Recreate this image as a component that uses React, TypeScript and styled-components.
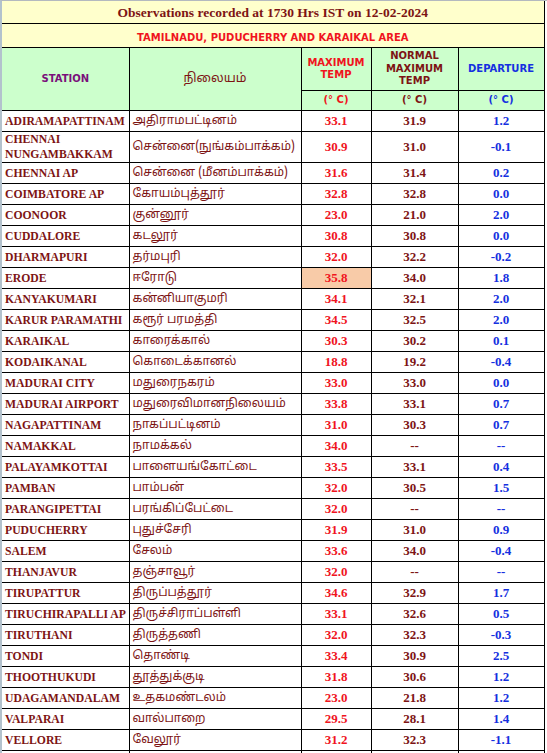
import React from 'react';
import styled, { createGlobalStyle } from 'styled-components';

const GlobalStyle = createGlobalStyle`
  html, body {
    margin: 0;
    padding: 0;
    background: #ffffff;
  }
`;

type Tone = 'red' | 'maroon' | 'blue' | 'purple';

const tones: Record<Tone, string> = {
  red: '#f0141e',
  maroon: '#7d1414',
  blue: '#1530e0',
  purple: '#7a0f7a',
};

type Row = {
  name: string;
  tamil: string;
  max: string;
  normal: string;
  dep: string;
  tall?: boolean;
  hot?: boolean;
};

const rows: Row[] = [
  { name: 'ADIRAMAPATTINAM', tamil: 'அதிராமபட்டினம்', max: '33.1', normal: '31.9', dep: '1.2' },
  { name: 'CHENNAI\nNUNGAMBAKKAM', tamil: 'சென்னை(நுங்கம்பாக்கம்)', max: '30.9', normal: '31.0', dep: '-0.1', tall: true },
  { name: 'CHENNAI AP', tamil: 'சென்னை (மீனம்பாக்கம்)', max: '31.6', normal: '31.4', dep: '0.2' },
  { name: 'COIMBATORE AP', tamil: 'கோயம்புத்தூர்', max: '32.8', normal: '32.8', dep: '0.0' },
  { name: 'COONOOR', tamil: 'குன்னூர்', max: '23.0', normal: '21.0', dep: '2.0' },
  { name: 'CUDDALORE', tamil: 'கடலூர்', max: '30.8', normal: '30.8', dep: '0.0' },
  { name: 'DHARMAPURI', tamil: 'தர்மபுரி', max: '32.0', normal: '32.2', dep: '-0.2' },
  { name: 'ERODE', tamil: 'ஈரோடு', max: '35.8', normal: '34.0', dep: '1.8', hot: true },
  { name: 'KANYAKUMARI', tamil: 'கன்னியாகுமரி', max: '34.1', normal: '32.1', dep: '2.0' },
  { name: 'KARUR PARAMATHI', tamil: 'கரூர் பரமத்தி', max: '34.5', normal: '32.5', dep: '2.0' },
  { name: 'KARAIKAL', tamil: 'காரைக்கால்', max: '30.3', normal: '30.2', dep: '0.1' },
  { name: 'KODAIKANAL', tamil: 'கொடைக்கானல்', max: '18.8', normal: '19.2', dep: '-0.4' },
  { name: 'MADURAI CITY', tamil: 'மதுரைநகரம்', max: '33.0', normal: '33.0', dep: '0.0' },
  { name: 'MADURAI AIRPORT', tamil: 'மதுரைவிமானநிலையம்', max: '33.8', normal: '33.1', dep: '0.7' },
  { name: 'NAGAPATTINAM', tamil: 'நாகப்பட்டினம்', max: '31.0', normal: '30.3', dep: '0.7' },
  { name: 'NAMAKKAL', tamil: 'நாமக்கல்', max: '34.0', normal: '--', dep: '--' },
  { name: 'PALAYAMKOTTAI', tamil: 'பாளையங்கோட்டை', max: '33.5', normal: '33.1', dep: '0.4' },
  { name: 'PAMBAN', tamil: 'பாம்பன்', max: '32.0', normal: '30.5', dep: '1.5' },
  { name: 'PARANGIPETTAI', tamil: 'பரங்கிப்பேட்டை', max: '32.0', normal: '--', dep: '--' },
  { name: 'PUDUCHERRY', tamil: 'புதுச்சேரி', max: '31.9', normal: '31.0', dep: '0.9' },
  { name: 'SALEM', tamil: 'சேலம்', max: '33.6', normal: '34.0', dep: '-0.4' },
  { name: 'THANJAVUR', tamil: 'தஞ்சாவூர்', max: '32.0', normal: '--', dep: '--' },
  { name: 'TIRUPATTUR', tamil: 'திருப்பத்தூர்', max: '34.6', normal: '32.9', dep: '1.7' },
  { name: 'TIRUCHIRAPALLI AP', tamil: 'திருச்சிராப்பள்ளி', max: '33.1', normal: '32.6', dep: '0.5' },
  { name: 'TIRUTHANI', tamil: 'திருத்தணி', max: '32.0', normal: '32.3', dep: '-0.3' },
  { name: 'TONDI', tamil: 'தொண்டி', max: '33.4', normal: '30.9', dep: '2.5' },
  { name: 'THOOTHUKUDI', tamil: 'தூத்துக்குடி', max: '31.8', normal: '30.6', dep: '1.2' },
  { name: 'UDAGAMANDALAM', tamil: 'உதகமண்டலம்', max: '23.0', normal: '21.8', dep: '1.2' },
  { name: 'VALPARAI', tamil: 'வால்பாறை', max: '29.5', normal: '28.1', dep: '1.4' },
  { name: 'VELLORE', tamil: 'வேலூர்', max: '31.2', normal: '32.3', dep: '-1.1' },
];

const Frame = styled.div`
  width: 546px;
  border-top: 1px solid #b4b9bf;
  border-left: 2px solid #b3c2cd;
`;

const Table = styled.table`
  border-collapse: collapse;
  table-layout: fixed;
  width: 542px;

  td {
    border: 1px solid #000;
    padding: 0;
  }
  tr > td:first-child {
    border-left: none;
  }
  tr:first-child > td {
    border-top: none;
  }
`;

const Banner = styled.td<{ $h: number }>`
  height: ${p => p.$h}px;
  background: #ffffcc;
  text-align: center;
`;

const Title = styled.span`
  font-family: 'Liberation Serif', 'Times New Roman', serif;
  font-weight: bold;
  font-size: 13.5px;
  color: ${tones.maroon};
`;

const Area = styled.span`
  font-family: 'DejaVu Sans', Verdana, sans-serif;
  font-weight: bold;
  font-size: 10px;
  color: ${tones.red};
`;

const HeadCell = styled.td<{ $tone: Tone; $h?: number }>`
  background: #ccffcc;
  text-align: center;
  height: ${p => (p.$h ? `${p.$h}px` : 'auto')};
  font-family: 'DejaVu Sans', Verdana, sans-serif;
  font-weight: bold;
  font-size: 10px;
  line-height: 12.5px;
  color: ${p => tones[p.$tone]};
`;

const TamilHead = styled.td`
  background: #ccffcc;
  text-align: center;
  font-family: 'Noto Sans Tamil', Latha, 'Noto Sans', sans-serif;
  font-size: 12.5px;
  color: ${tones.maroon};
`;

const DataRow = styled.tr<{ $tall?: boolean }>`
  height: ${p => (p.$tall ? 28 : 21)}px;
`;

const Station = styled.td`
  padding-left: 3px !important;
  white-space: pre;
  font-family: 'Liberation Serif', 'Times New Roman', serif;
  font-weight: bold;
  font-size: 11.7px;
  line-height: 15px;
  color: ${tones.maroon};
`;

const TamilName = styled.td`
  padding-left: 3px !important;
  font-family: 'Noto Sans Tamil', Latha, 'Noto Sans', sans-serif;
  font-size: 12px;
  white-space: nowrap;
  overflow: hidden;
  color: ${tones.maroon};
`;

const Value = styled.td<{ $tone: Tone; $hot?: boolean }>`
  text-align: center;
  background: ${p => (p.$hot ? '#f8cba8' : '#ffffff')};
  font-family: 'Liberation Serif', 'Times New Roman', serif;
  font-weight: bold;
  font-size: 13px;
  color: ${p => tones[p.$tone]};
`;

export default function App() {
  return (
    <>
      <GlobalStyle />
      <Frame>
        <Table>
          <colgroup>
            <col style={{ width: 127 }} />
            <col style={{ width: 172 }} />
            <col style={{ width: 70 }} />
            <col style={{ width: 87 }} />
            <col style={{ width: 86 }} />
          </colgroup>
          <tbody>
            <tr>
              <Banner colSpan={5} $h={22}>
                <Title>Observations recorded at 1730 Hrs IST on 12-02-2024</Title>
              </Banner>
            </tr>
            <tr>
              <Banner colSpan={5} $h={23}>
                <Area>TAMILNADU, PUDUCHERRY AND KARAIKAL AREA</Area>
              </Banner>
            </tr>
            <tr>
              <HeadCell rowSpan={2} $tone="purple">STATION</HeadCell>
              <TamilHead rowSpan={2}>நிலையம்</TamilHead>
              <HeadCell $tone="red" $h={42}>MAXIMUM<br />TEMP</HeadCell>
              <HeadCell $tone="maroon" $h={42}>NORMAL<br />MAXIMUM<br />TEMP</HeadCell>
              <HeadCell $tone="blue" $h={42}>DEPARTURE</HeadCell>
            </tr>
            <tr>
              <HeadCell $tone="red" $h={19}>(° C)</HeadCell>
              <HeadCell $tone="maroon" $h={19}>(° C)</HeadCell>
              <HeadCell $tone="blue" $h={19}>(° C)</HeadCell>
            </tr>
            {rows.map(r => (
              <DataRow key={r.name} $tall={r.tall}>
                <Station>{r.name}</Station>
                <TamilName>{r.tamil}</TamilName>
                <Value $tone="red" $hot={r.hot}>{r.max}</Value>
                <Value $tone="maroon">{r.normal}</Value>
                <Value $tone="blue">{r.dep}</Value>
              </DataRow>
            ))}
            <DataRow>
              <Station />
              <TamilName />
              <Value $tone="red" />
              <Value $tone="maroon" />
              <Value $tone="blue" />
            </DataRow>
          </tbody>
        </Table>
      </Frame>
    </>
  );
}
